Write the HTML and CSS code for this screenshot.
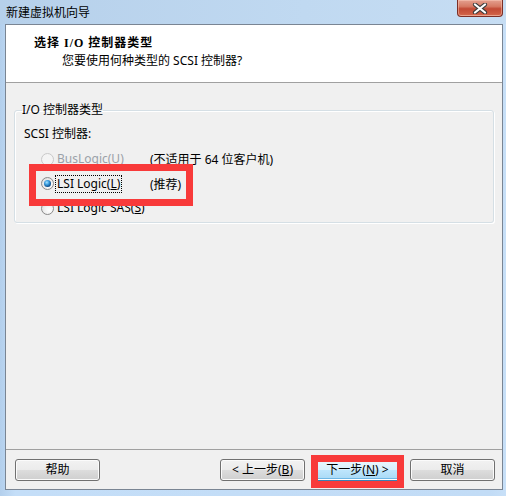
FILE: index.html
```html
<!DOCTYPE html>
<html lang="zh-CN">
<head>
<meta charset="utf-8">
<title>新建虚拟机向导</title>
<link rel="stylesheet" href="styles.css">
</head>
<body>
<div class="window">
  <div class="titlebar">
    <span class="title">新建虚拟机向导</span>
    <button class="close" aria-label="关闭">
      <svg width="16" height="11" viewBox="0 0 16 11">
        <path d="M3 1.5 L13 9.5 M13 1.5 L3 9.5" stroke="#3b3b3b" stroke-width="4.2" stroke-linecap="round"/>
        <path d="M3 1.5 L13 9.5 M13 1.5 L3 9.5" stroke="#ffffff" stroke-width="2.2" stroke-linecap="round"/>
      </svg>
    </button>
  </div>
  <div class="client">
    <div class="header">
      <div class="h-title">选择 I/O 控制器类型</div>
      <div class="h-sub">您要使用何种类型的 SCSI 控制器?</div>
    </div>
    <div class="body">
      <fieldset class="group">
        <legend>I/O 控制器类型</legend>
        <div class="group-body">
          <div class="caption">SCSI 控制器:</div>
          <div class="radios">
            <div class="radio-row disabled">
              <span class="radio"></span>
              <span class="rlabel">BusLogic(<u>U</u>)</span>
              <span class="note">(不适用于 64 位客户机)</span>
            </div>
            <div class="radio-row">
              <span class="radio checked"></span>
              <span class="rlabel focus">LSI Logic(<u>L</u>)</span>
              <span class="note">(推荐)</span>
            </div>
            <div class="radio-row">
              <span class="radio"></span>
              <span class="rlabel">LSI Logic SAS(<u>S</u>)</span>
            </div>
            <div class="mark mark-radio"></div>
          </div>
        </div>
      </fieldset>
    </div>
    <div class="footer">
      <button class="btn help">帮助</button>
      <button class="btn">&lt; 上一步(<u>B</u>)</button>
      <span class="next-wrap">
        <button class="btn default">下一步(<u>N</u>) &gt;</button>
      </span>
      <button class="btn">取消</button>
    </div>
  </div>
</div>
</body>
</html>
```

FILE: styles.css
```css
*, *::before, *::after { box-sizing: border-box; }

html, body {
  margin: 0;
  padding: 0;
}

body {
  width: 506px;
  height: 496px;
  overflow: hidden;
  background: #c1dcf6;
  font: 12px "Noto Sans", "Noto Sans CJK SC", sans-serif;
  color: #000;
}

.window {
  width: 506px;
  height: 496px;
  display: flex;
  flex-direction: column;
  background: linear-gradient(to right, #b3cfec, #c4def8 3%, #c2dcf6 97%, #c8e0f8);
}

.titlebar {
  height: 24px;
  flex: none;
  display: flex;
  justify-content: space-between;
  align-items: flex-start;
  padding-left: 6px;
  background: linear-gradient(to right, #b6d0ea, #c0d9f1 60%, #c6ddf3);
}

.title {
  line-height: 24px;
  font-family: "Noto Sans CJK SC", sans-serif;
}

.close {
  width: 46px;
  height: 17px;
  margin-right: 3px;
  padding: 0;
  border: 1px solid #7c2f26;
  border-top: none;
  border-radius: 0 0 4px 4px;
  background: linear-gradient(#e4a08f, #d67a64 40%, #c24a35 55%, #cf5f45 90%, #e08a6f);
  box-shadow: inset 0 0 0 1px rgba(255, 210, 195, 0.45);
  display: flex;
  align-items: center;
  justify-content: center;
}

.client {
  flex: 1;
  margin: 0 3px 6px 5px;
  border: 1px solid #7a8593;
  background: #f0f0f0;
  display: flex;
  flex-direction: column;
}

.header {
  height: 58px;
  flex: none;
  background: #fff;
  border-bottom: 1px solid #a0a0a0;
  padding: 9px 0 0 28px;
}

.h-title {
  line-height: 18px;
  font-weight: bold;
  letter-spacing: 1px;
  font-family: "Liberation Serif", "Noto Sans CJK SC", serif;
}

.h-sub {
  line-height: 18px;
  padding-left: 28px;
}

.body {
  flex: 1;
  padding: 20px 8px 0 8px;
}

.group {
  margin: 0;
  padding: 0;
  min-width: 0;
  border: 1px solid #d5dfe5;
  border-radius: 3px;
  box-shadow: inset 1px 1px 0 #fff, 1px 1px 0 #fff;
}

.group legend {
  margin-left: 7px;
  padding: 0;
  line-height: 14px;
}

.group-body {
  padding: 8px 0 1px 9px;
}

.caption {
  line-height: 18px;
}

.radios {
  position: relative;
  margin-top: 4px;
}

.radio-row {
  display: grid;
  grid-template-columns: 16px 93px auto;
  align-items: center;
  height: 24.5px;
  padding-left: 17px;
}

.rlabel {
  justify-self: start;
  line-height: 16px;
  white-space: nowrap;
}

.radio-row.disabled .rlabel {
  color: #9aa0a8;
}

.focus {
  border: 1px dotted #000;
  padding: 0 1px;
  margin-left: -2px;
}

.radio {
  width: 13px;
  height: 13px;
  border-radius: 50%;
  border: 1px solid #8a8a8a;
  background: radial-gradient(circle at 65% 65%, #ffffff 0, #f1f1f1 45%, #d4d4d4 100%);
  position: relative;
}

.radio.checked::after {
  content: "";
  position: absolute;
  left: 2px;
  top: 2px;
  width: 7px;
  height: 7px;
  border-radius: 50%;
  background: radial-gradient(circle at 40% 35%, #a6e3ff 0, #3c9ee0 35%, #0d4f8c 70%, #0a3662 100%);
}

.radio-row.disabled .radio {
  border-color: #c9c9c9;
  background: #f4f4f4;
}

.mark {
  position: absolute;
  border: 7px solid #f83a3a;
  pointer-events: none;
}

.mark-radio {
  left: 5px;
  top: 17px;
  width: 164px;
  height: 42px;
}

.footer {
  flex: none;
  display: flex;
  gap: 10px;
  border-top: 1px solid #a0a0a0;
  padding: 9px 7px 8px 9px;
}

.btn {
  width: 85px;
  height: 22px;
  padding: 0;
  border: 1px solid #707070;
  border-radius: 3px;
  background: linear-gradient(#f2f2f2 0%, #ebebeb 50%, #dddddd 50%, #cfcfcf 100%);
  box-shadow: inset 0 0 0 1px #fbfbfb;
  font: inherit;
  color: #000;
  line-height: 18px;
}

.help {
  margin-right: auto;
}

.next-wrap {
  position: relative;
  display: block;
}

.btn.default {
  display: block;
  border-color: #3c7fb1;
  background: linear-gradient(#eaf6fd 0%, #d9f0fc 50%, #bee6fd 50%, #a7d9f5 100%);
  box-shadow: inset 0 0 0 1px #fff, inset 0 -2px 0 #6fb8e6;
}

.next-wrap::after {
  content: "";
  position: absolute;
  left: -4px;
  top: -4px;
  width: 93px;
  height: 33px;
  border: 7px solid #f83a3a;
  pointer-events: none;
}
```
